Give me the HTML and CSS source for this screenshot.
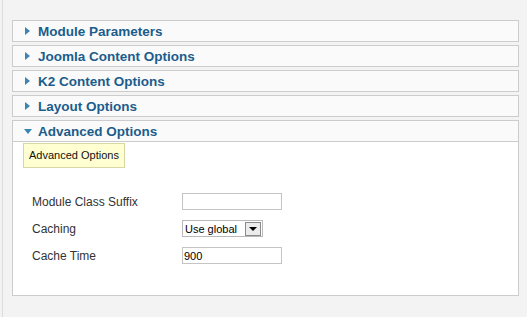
FILE: index.html
```html
<!DOCTYPE html>
<html lang="en">

<head>
    <meta charset="UTF-8">
    <meta name="viewport" content="width=device-width, initial-scale=1.0">
    <title>Module Options</title>
    <link rel="stylesheet" href="styles.css">
</head>

<body>
    <div class="page">
        <div class="pane">
            <div class="pane-head"><span class="arrow"></span>Module Parameters</div>
        </div>
        <div class="pane">
            <div class="pane-head"><span class="arrow"></span>Joomla Content Options</div>
        </div>
        <div class="pane">
            <div class="pane-head"><span class="arrow"></span>K2 Content Options</div>
        </div>
        <div class="pane">
            <div class="pane-head"><span class="arrow"></span>Layout Options</div>
        </div>
        <div class="pane open">
            <div class="pane-head"><span class="arrow"></span>Advanced Options</div>
            <div class="pane-body">
                <div class="tip">Advanced Options</div>
                <div class="params">
                    <label class="lbl" for="suffix">Module Class Suffix</label>
                    <input type="text" id="suffix" class="field" value="">
                    <label class="lbl">Caching</label>
                    <div class="select">
                        <span class="select-val">Use global</span>
                        <span class="select-btn"><span class="select-tri"></span></span>
                    </div>
                    <label class="lbl" for="cachetime">Cache Time</label>
                    <input type="text" id="cachetime" class="field" value="900">
                </div>
            </div>
        </div>
    </div>
</body>

</html>
```

FILE: styles.css
```css
body {
    margin: 0;
    padding: 0;
    background: #f3f3f3;
    font-family: "Liberation Sans", Arial, sans-serif;
}

.page {
    margin-left: 2px;
    border-left: 1px solid #dcdcdc;
    padding: 20px 8px 0 9px;
    min-height: 100vh;
    box-sizing: border-box;
}

.pane {
    border: 1px solid #cccccc;
    background: #fafafa;
    margin-bottom: 3px;
}

.pane-head {
    display: flex;
    align-items: center;
    height: 20px;
    padding-left: 12px;
    font-size: 13.5px;
    font-weight: bold;
    color: #1b5d8c;
}

.arrow {
    width: 0;
    height: 0;
    margin-right: 8px;
    border-top: 4px solid transparent;
    border-bottom: 4px solid transparent;
    border-left: 5px solid #3a86b3;
}

.open .pane-head {
    border-bottom: 1px solid #cccccc;
}

.open .arrow {
    margin-left: -1px;
    margin-right: 6px;
    border-left: 4px solid transparent;
    border-right: 4px solid transparent;
    border-top: 5px solid #3a86b3;
    border-bottom: 0;
}

.pane-body {
    background: #ffffff;
    padding: 1px 0 31px 0;
}

.tip {
    display: inline-block;
    margin-left: 10px;
    padding: 0 5px;
    height: 23px;
    line-height: 23px;
    font-size: 11px;
    color: #111;
    background: #ffffd2;
    border: 1px solid #d8d8a4;
}

.params {
    display: grid;
    grid-template-columns: 150px auto;
    row-gap: 10px;
    align-items: center;
    justify-items: start;
    margin: 25px 0 0 19px;
}

.lbl {
    font-size: 12px;
    color: #333;
}

.field {
    box-sizing: border-box;
    width: 100px;
    height: 17px;
    margin: 0;
    padding: 0 1px;
    border: 1px solid #c4c4c4;
    font-family: "Liberation Sans", Arial, sans-serif;
    font-size: 11px;
    color: #000;
    background: #fff;
}

.select {
    box-sizing: border-box;
    display: flex;
    align-items: center;
    width: 81px;
    height: 17px;
    border: 1px solid #b9b9b9;
    background: #fff;
}

.select-val {
    flex: 1;
    padding-left: 2px;
    font-size: 11px;
    color: #000;
}

.select-btn {
    box-sizing: border-box;
    display: flex;
    align-items: center;
    justify-content: center;
    width: 16px;
    height: 14px;
    margin-right: 1px;
    border: 1px solid #8a8a8a;
    background: #ececec;
}

.select-tri {
    width: 0;
    height: 0;
    margin-top: 1px;
    border-left: 4px solid transparent;
    border-right: 4px solid transparent;
    border-top: 4px solid #000;
}
```
